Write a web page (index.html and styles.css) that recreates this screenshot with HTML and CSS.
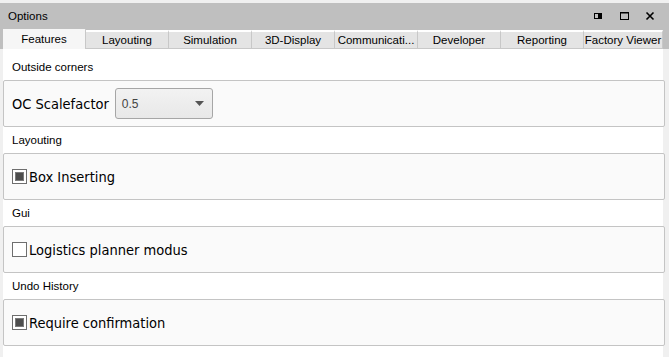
FILE: index.html
```html
<!DOCTYPE html>
<html>
<head>
<meta charset="utf-8">
<link rel="stylesheet" href="styles.css">
</head>
<body>
<div class="window">
  <div class="titlebar">
    <span class="title">Options</span>
    <div class="tools">
      <svg width="10" height="10" viewBox="0 0 10 10"><rect x="1.5" y="2.5" width="7" height="5" fill="none" stroke="#000" stroke-width="1"/><rect x="5" y="3" width="3" height="4" fill="#000"/></svg>
      <svg width="10" height="10" viewBox="0 0 10 10"><rect x="1.5" y="1.5" width="8" height="7" fill="none" stroke="#000" stroke-width="1"/><line x1="1" y1="2" x2="10" y2="2" stroke="#000" stroke-width="1"/></svg>
      <svg width="10" height="10" viewBox="0 0 10 10"><path d="M1.5 1.5 L8.5 8.5 M8.5 1.5 L1.5 8.5" stroke="#000" stroke-width="1.6"/></svg>
    </div>
  </div>
  <div class="tabs">
    <div class="tab active">Features</div>
    <div class="tab">Layouting</div>
    <div class="tab">Simulation</div>
    <div class="tab">3D-Display</div>
    <div class="tab">Communicati...</div>
    <div class="tab">Developer</div>
    <div class="tab">Reporting</div>
    <div class="tab last">Factory Viewer</div>
  </div>
  <div class="content">
    <div class="section-label first">Outside corners</div>
    <div class="group">
      <span class="big">OC Scalefactor</span>
      <div class="combo"><span class="combo-val">0.5</span><svg class="arrow" width="9" height="5" viewBox="0 0 9 5"><path d="M0 0 H9 L4.5 5 Z" fill="#555"/></svg></div>
    </div>
    <div class="section-label">Layouting</div>
    <div class="group">
      <span class="check on"></span><span class="big">Box Inserting</span>
    </div>
    <div class="section-label">Gui</div>
    <div class="group">
      <span class="check"></span><span class="big">Logistics planner modus</span>
    </div>
    <div class="section-label">Undo History</div>
    <div class="group">
      <span class="check on"></span><span class="big">Require confirmation</span>
    </div>
  </div>
</div>
</body>
</html>
```
FILE: styles.css
```css
html, body {
  margin: 0;
  padding: 0;
  background: #f0f0f0;
}
body {
  font-family: "Liberation Sans", Arial, sans-serif;
  color: #000;
  width: 669px;
  height: 357px;
  overflow: hidden;
}
.window {
  padding-top: 3px;
  display: flex;
  flex-direction: column;
}
.titlebar {
  height: 26px;
  background: #bfbfbf;
  display: flex;
  align-items: center;
  justify-content: space-between;
  padding: 0 0 0 8px;
}
.title {
  font-size: 11.5px;
}
.tools {
  display: flex;
  gap: 16px;
  padding-right: 14px;
  align-items: center;
}
.tools svg { display: block; }
.tabs {
  display: flex;
  padding-left: 3px;
  height: 20px;
  background: #bfbfbf;
}
.tab {
  margin-top: 1px;
  border-top: 2px solid #fff;
  border-right: 1px solid #c8c8c8;
  border-bottom: 1px solid #c8c8c8;
  background: #e4e4e4;
  font-size: 11.5px;
  display: flex;
  align-items: center;
  justify-content: center;
  box-sizing: border-box;
  height: 19px;
  width: 83px;
  white-space: nowrap;
}
.tab.active {
  margin-top: 0;
  height: 20px;
  border-top: 0;
  border-bottom: 0;
  background: #f6f6f6;
}
.tab.last {
  width: 79px;
}
.content {
  margin-left: 3px;
  width: 660px;
  background: #ffffff;
  height: 308px;
}
.section-label {
  height: 26px;
  font-size: 11.5px;
  display: flex;
  align-items: center;
  padding-left: 9px;
  box-sizing: border-box;
}
.section-label.first {
  height: 31px;
  padding-top: 4px;
}
.group {
  height: 47px;
  box-sizing: border-box;
  border: 1px solid #c4c4c4;
  border-radius: 2px;
  background: #fafafa;
  display: flex;
  align-items: center;
  padding-left: 8px;
  margin-right: -2px;
}
.big {
  font-family: "DejaVu Sans Condensed", "DejaVu Sans", sans-serif;
  font-stretch: condensed;
  font-size: 14.5px;
}
.combo {
  margin-left: 6px;
  width: 98px;
  height: 31px;
  box-sizing: border-box;
  border: 1px solid #a6a6a6;
  border-radius: 3px;
  background: linear-gradient(#f2f2f2, #e8e8e8);
  display: flex;
  align-items: center;
  justify-content: space-between;
  padding: 0 8px 0 6px;
}
.combo-val {
  font-size: 12px;
  color: #444;
}
.arrow { display: block; }
.check {
  width: 15px;
  height: 15px;
  box-sizing: border-box;
  border: 1px solid #6e6e6e;
  background: #fff;
  margin-right: 2px;
  display: flex;
  align-items: center;
  justify-content: center;
}
.check.on::after {
  content: "";
  width: 9px;
  height: 9px;
  box-sizing: border-box;
  background: #4d4d4d;
  border: 1px solid #7a7a7a;
}
```
